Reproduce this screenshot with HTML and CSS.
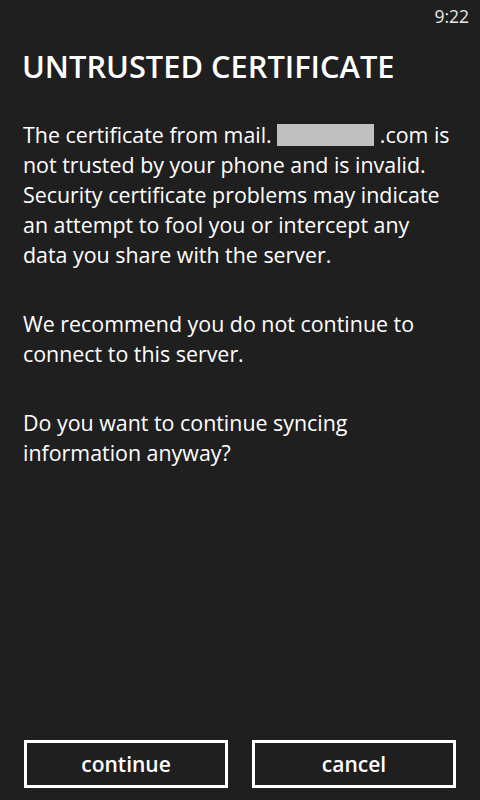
FILE: index.html
```html
<!DOCTYPE html>
<html>
<head>
<meta charset="utf-8">
<link rel="stylesheet" href="styles.css">
</head>
<body>
<div class="screen">
  <div class="status"><span class="time">9:22</span></div>
  <h1 class="title">UNTRUSTED CERTIFICATE</h1>
  <div class="content">
    <p class="para"><span class="line">The certificate from mail. <span class="redact"></span> .com is</span>not trusted by your phone and is invalid. Security certificate problems may indicate an attempt to fool you or intercept any data you share with the server.</p>
    <p class="para">We recommend you do not continue to connect to this server.</p>
    <p class="para">Do you want to continue syncing information anyway?</p>
  </div>
  <div class="actions">
    <button class="btn">continue</button>
    <button class="btn">cancel</button>
  </div>
</div>
</body>
</html>
```
FILE: styles.css
```css
html, body {
  margin: 0;
  padding: 0;
  background: #1f1f1f;
}
.screen {
  width: 480px;
  height: 800px;
  display: flex;
  flex-direction: column;
  color: #ffffff;
  font-family: "Open Sans", "Noto Sans", sans-serif;
  box-sizing: border-box;
}
.status {
  height: 32px;
  display: flex;
  justify-content: flex-end;
  align-items: center;
  padding-right: 11px;
}
.time {
  font-size: 17.5px;
  color: #e6e6e6;
}
.title {
  margin: 14px 0 0 22px;
  font-size: 30.8px;
  font-weight: 600;
  line-height: 40px;
  letter-spacing: 0;
}
.content {
  padding: 0 23px;
  margin-top: 34px;
  flex: 1;
}
.para {
  margin: 0 0 39px 0;
  font-size: 21.4px;
  line-height: 30px;
}
.line {
  display: block;
}
.redact {
  display: inline-block;
  width: 97px;
  height: 22px;
  background: #c0c0c0;
  vertical-align: -3px;
}
.actions {
  display: flex;
  gap: 24px;
  padding: 0 24px 12px 24px;
}
.btn {
  flex: 1;
  height: 48px;
  background: transparent;
  border: 3px solid #ffffff;
  color: #ffffff;
  font-family: "Open Sans", "Noto Sans", sans-serif;
  font-size: 21px;
  font-weight: 600;
  padding: 0;
}
```
